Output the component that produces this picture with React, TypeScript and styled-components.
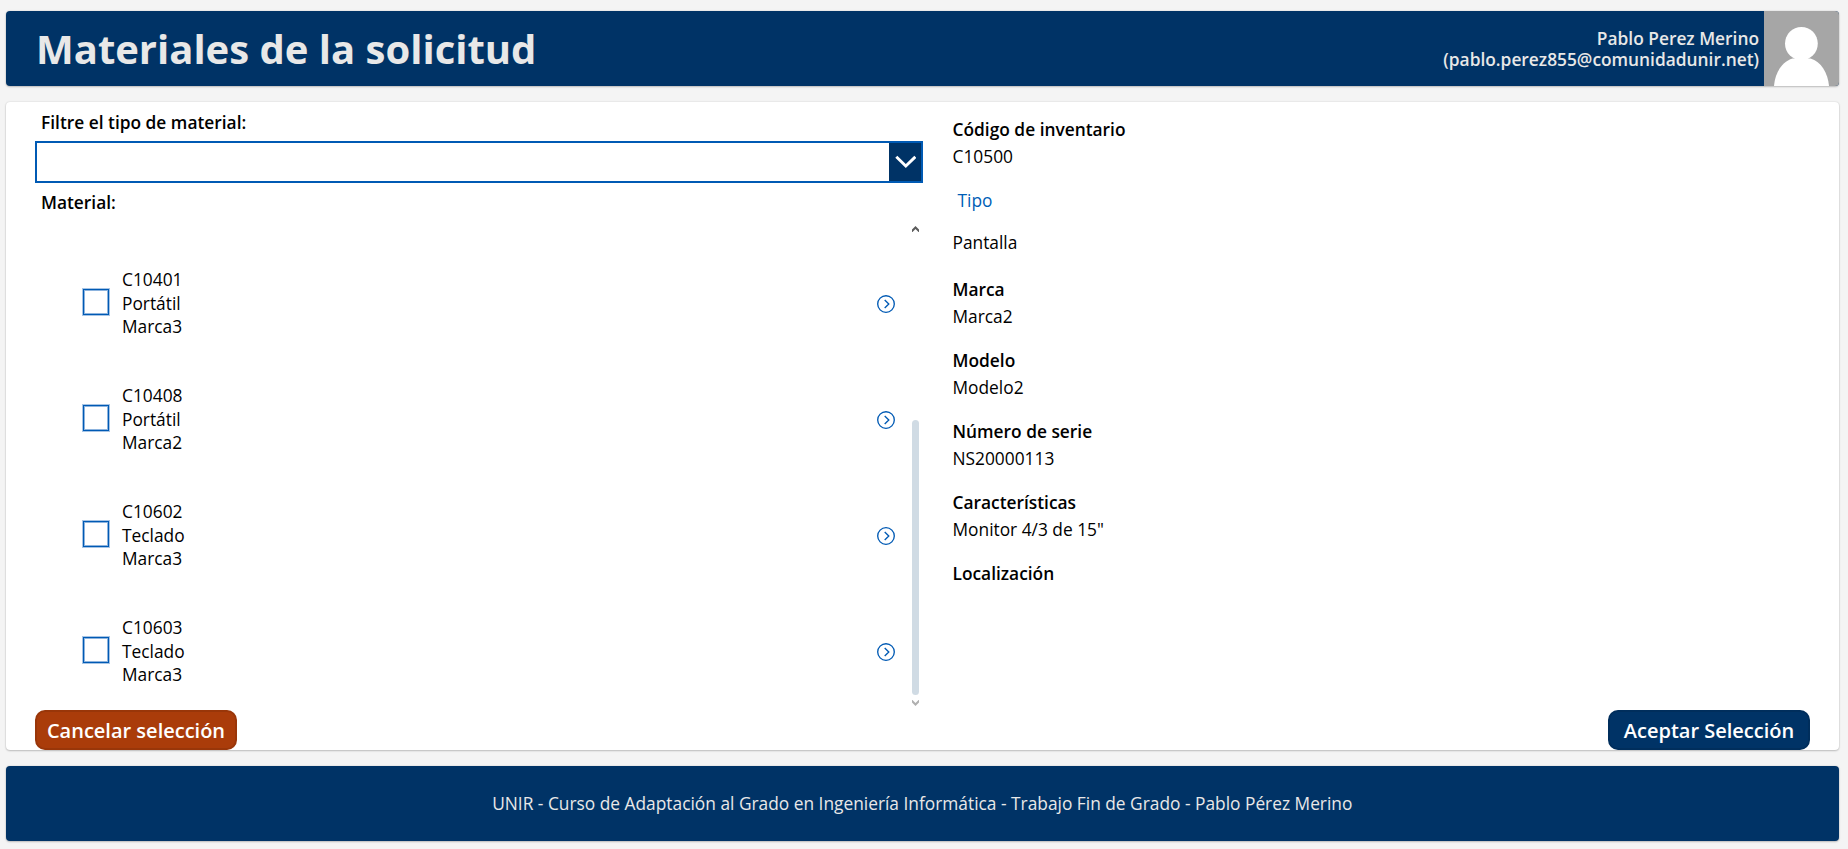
import React from "react";
import styled, { createGlobalStyle, css } from "styled-components";

const navy = "#003366";
const blue = "#005ab4";

const GlobalStyle = createGlobalStyle`
  * { box-sizing: border-box; }
  body {
    margin: 0;
    background: #f4f4f4;
    color: #000;
    font-family: "Open Sans", "Noto Sans", sans-serif;
    font-size: 17.333px;
    line-height: 24px;
  }
  button { font-family: inherit; }
`;

const Screen = styled.div`
  display: flex;
  flex-direction: column;
  gap: 16px;
  width: 1848px;
  height: 849px;
  padding: 11px 9px 8px 6px;
  overflow: hidden;
`;

const panel = css`
  border-radius: 4px;
  box-shadow: 0 0 2px rgba(0, 0, 0, 0.14), 0 1px 2px rgba(0, 0, 0, 0.2);
`;

const Header = styled.header`
  ${panel}
  display: flex;
  align-items: center;
  height: 75px;
  flex: none;
  overflow: hidden;
  padding-left: 30px;
  background: ${navy};
  color: #e8e8e8;
`;

const Title = styled.h1`
  flex: 1;
  margin: 0;
  font-size: 40px;
  font-weight: 700;
  line-height: 54px;
`;

const User = styled.div`
  margin-right: 5px;
  padding-top: 1px;
  font-weight: 600;
  line-height: 21px;
  text-align: right;
`;

const Avatar = styled.svg`
  display: block;
  width: 75px;
  height: 75px;
  background: #a6a6a6;
`;

const Main = styled.main`
  ${panel}
  display: flex;
  flex-direction: column;
  flex: none;
  height: 648px;
  padding: 0 29px;
  background: #fff;
`;

const Columns = styled.div`
  display: grid;
  grid-template-columns: 888px 1fr;
  column-gap: 29.5px;
  height: 608px;
`;

const Picker = styled.section`
  display: flex;
  flex-direction: column;
  padding-top: 8px;
`;

const Label = styled.div`
  height: 24px;
  padding-left: 6px;
  font-weight: 600;
`;

const Select = styled.div`
  display: flex;
  justify-content: flex-end;
  height: 42px;
  margin: 7px 0;
  border: 2px solid ${blue};
`;

const SelectArrow = styled.div`
  display: flex;
  align-items: center;
  justify-content: center;
  width: 32px;
  background: ${navy};
`;

const ListArea = styled.div`
  display: flex;
  flex: 1;
`;

const List = styled.ul`
  flex: 1;
  margin: 0;
  padding: 54px 0 0 48px;
  list-style: none;
`;

const Item = styled.li`
  display: flex;
  height: 116px;
  padding-right: 17px;
`;

const Checkbox = styled.div`
  width: 26px;
  height: 26px;
  margin: 21px 13px 0 0;
  border: 1px solid ${blue};
  box-shadow: 0 0 0 1px #a6c4e5, inset 0 0 0 1px #8cb3de;
`;

const ItemText = styled.div`
  flex: 1;
  line-height: 23.6px;
`;

const Circle = styled.svg`
  width: 18px;
  height: 18px;
  margin-top: 27px;
`;

const Scrollbar = styled.div`
  display: flex;
  flex-direction: column;
  align-items: center;
  width: 7px;
  margin-right: 4px;
  padding: 12px 0 0;
`;

const Thumb = styled.div`
  width: 7px;
  height: 275px;
  margin: 188px 0 5px;
  border-radius: 3.5px;
  background: #d0dbe4;
`;

const Details = styled.dl`
  margin: 0;
  padding-top: 15px;
`;

const Term = styled.dt<{ $link?: boolean }>`
  height: 24px;
  font-weight: ${(p) => (p.$link ? 400 : 600)};
  color: ${(p) => (p.$link ? "#005eb6" : "inherit")};
  padding-left: ${(p) => (p.$link ? "5px" : "0")};
`;

const Value = styled.dd<{ $top: number; $bottom: number }>`
  height: 24px;
  margin: ${(p) => `${p.$top}px 0 ${p.$bottom}px`};
`;

const Actions = styled.div`
  display: flex;
  justify-content: space-between;
`;

const Button = styled.button<{ $bg: string; $edge: string }>`
  width: 202px;
  height: 40px;
  padding: 2px 0 0;
  border: 2px solid ${(p) => p.$edge};
  border-radius: 10px;
  background: ${(p) => p.$bg};
  color: #fff;
  font-size: 20px;
  font-weight: 600;
  line-height: 28px;
`;

const Footer = styled.footer`
  ${panel}
  display: flex;
  align-items: center;
  justify-content: center;
  flex: none;
  height: 75px;
  padding: 0 0.5px 1px 0;
  background: ${navy};
  color: #e8e8e8;
`;

const items = [
  ["C10401", "Portátil", "Marca3"],
  ["C10408", "Portátil", "Marca2"],
  ["C10602", "Teclado", "Marca3"],
  ["C10603", "Teclado", "Marca3"],
];

const fields = [
  { term: "Código de inventario", value: "C10500", top: 3, bottom: 20 },
  { term: "Tipo", value: "Pantalla", link: true, top: 18, bottom: 23 },
  { term: "Marca", value: "Marca2", top: 3, bottom: 20 },
  { term: "Modelo", value: "Modelo2", top: 3, bottom: 20 },
  { term: "Número de serie", value: "NS20000113", top: 3, bottom: 20 },
  { term: "Características", value: 'Monitor 4/3 de 15"', top: 3, bottom: 20 },
  { term: "Localización", value: "", top: 3, bottom: 0 },
];

export default function App() {
  return (
    <Screen>
      <GlobalStyle />
      <Header>
        <Title>Materiales de la solicitud</Title>
        <User>
          Pablo Perez Merino
          <br />
          (pablo.perez855@comunidadunir.net)
        </User>
        <Avatar viewBox="0 0 75 75" fill="#fff">
          <ellipse cx="37.4" cy="32.6" rx="16.4" ry="16.6" />
          <path d="M10 75C11 62 18 50.500 28.500 47.500H46.500C57 50.500 64 62 65 75Z" />
        </Avatar>
      </Header>

      <Main>
        <Columns>
          <Picker>
            <Label>Filtre el tipo de material:</Label>
            <Select>
              <SelectArrow>
                <svg width="22" height="14" viewBox="0 0 22 14" fill="none" stroke="#fff" strokeWidth="2.9">
                  <path d="M2.300 1.800L11.800 11L21.300 1.800" />
                </svg>
              </SelectArrow>
            </Select>
            <Label>Material:</Label>
            <ListArea>
              <List>
                {items.map(([code, type, brand]) => (
                  <Item key={code}>
                    <Checkbox />
                    <ItemText>
                      {code}
                      <br />
                      {type}
                      <br />
                      {brand}
                    </ItemText>
                    <Circle viewBox="0 0 18 18" fill="none" stroke={blue} strokeWidth="1.35">
                      <circle cx="9" cy="9" r="8.300" />
                      <path d="M7.700 4.900L11.800 9L7.700 13.100" />
                    </Circle>
                  </Item>
                ))}
              </List>
              <Scrollbar>
                <svg width="7" height="6" viewBox="0 0 7 6" fill="#5c5c5c">
                  <path d="M0 3.500L3.500 0L7 3.500V6H6.500L3.500 3L0.500 6H0Z" />
                </svg>
                <Thumb />
                <svg width="7" height="6" viewBox="0 0 7 6" fill="#b0b0b0">
                  <path d="M0 2.500L3.500 6L7 2.500V0H6.500L3.500 3L0.500 0H0Z" />
                </svg>
              </Scrollbar>
            </ListArea>
          </Picker>
          <Details>
            {fields.map((f) => (
              <React.Fragment key={f.term}>
                <Term $link={f.link}>{f.term}</Term>
                <Value $top={f.top} $bottom={f.bottom}>
                  {f.value}
                </Value>
              </React.Fragment>
            ))}
          </Details>
        </Columns>
        <Actions>
          <Button $bg="#aa3c0a" $edge="#993609">
            Cancelar selección
          </Button>
          <Button $bg={navy} $edge="#002e5c">
            Aceptar Selección
          </Button>
        </Actions>
      </Main>

      <Footer>UNIR - Curso de Adaptación al Grado en Ingeniería Informática - Trabajo Fin de Grado - Pablo Pérez Merino</Footer>
    </Screen>
  );
}
